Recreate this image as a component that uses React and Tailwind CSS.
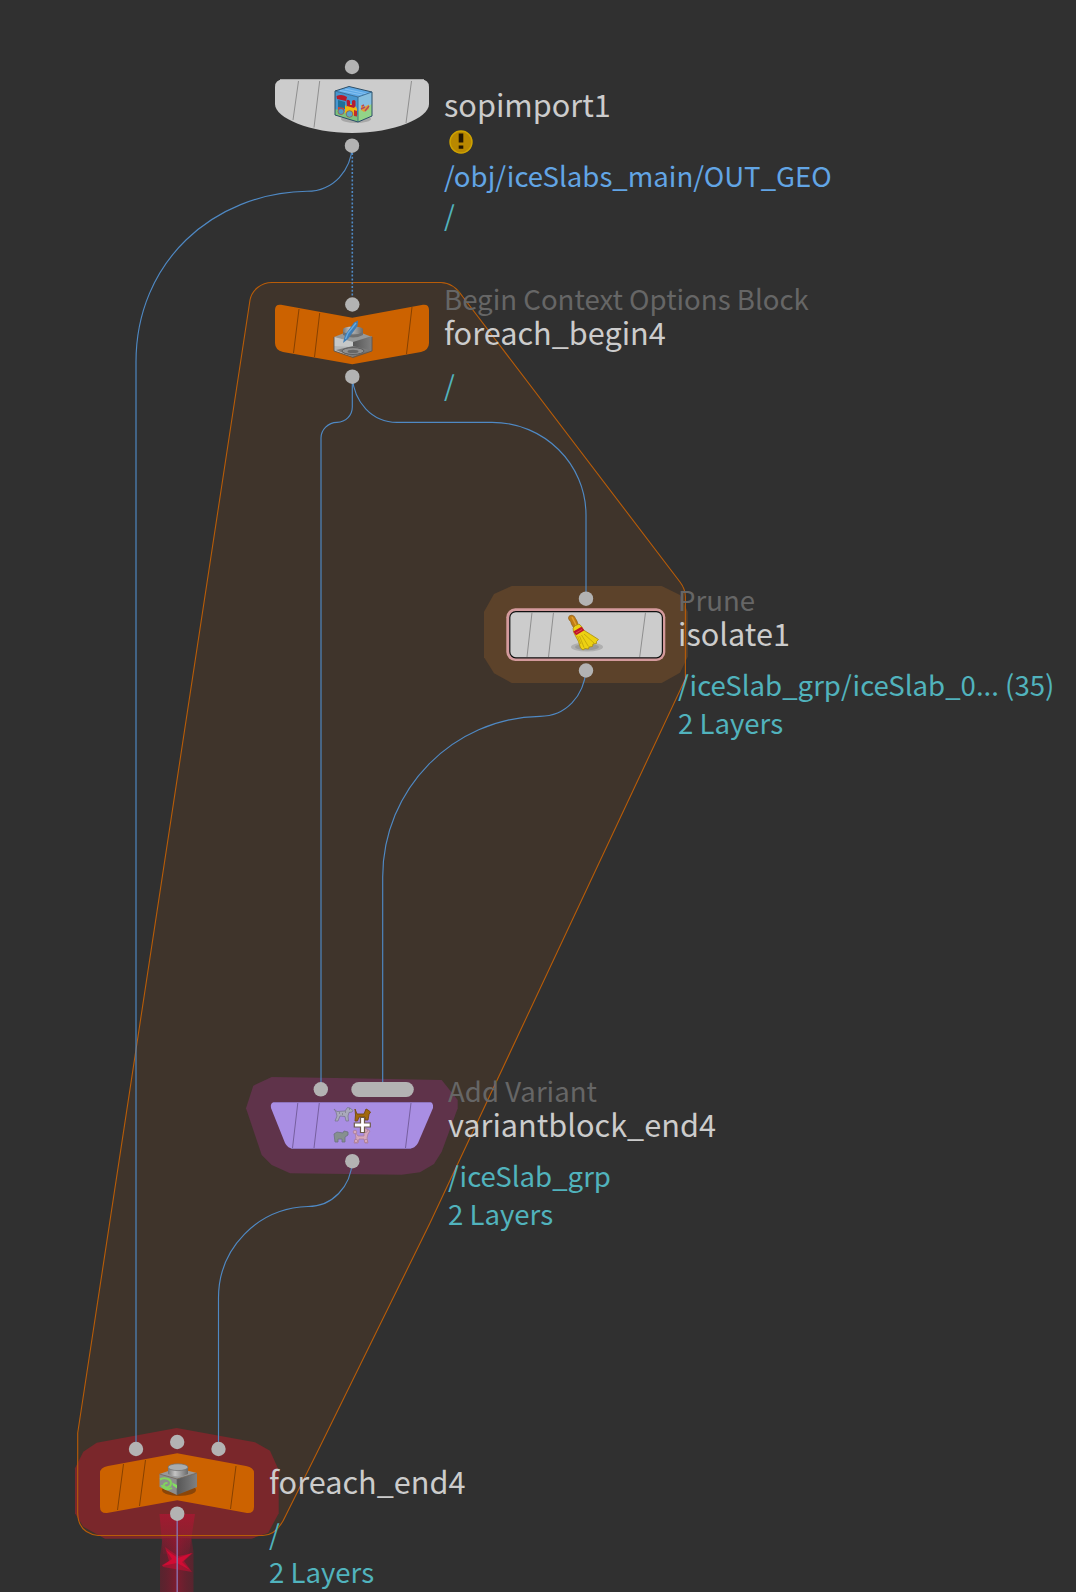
const REGION =
  "M250 300C252 290 261 282.5 272 282.5H441C450 282.5 457 288 463 297L680 582Q685.4 589 685.4 597V679L430 1223L318.3 1450L286 1515Q277 1535.5 263 1535.5H98Q78 1533 77.7 1513V1433Z";

const WIRES = [
  "M352.3 146C351 170 334 191 307 191.3C213 193 136 262 136 362V1449",
  "M352.3 377V407C352.3 415 346 422.3 337 422.3C328 422.3 321 430 321 438V1089",
  "M352.3 377C354 402 372 422.3 397 422.3H492C544 422.3 586 464 586 515V598",
  "M586 670C584 696 566 716.3 540 716.3C453 718 382.7 789 382.7 877V1089",
  "M352.3 1161C351 1187 332 1206.5 308 1206.5C258 1208 218.5 1248 218.5 1298V1449",
];

const DOTS = [
  [352, 67], [352, 145.7],
  [352.3, 304.5], [352.3, 376.7],
  [586, 598.7], [586, 670.5],
  [320.8, 1089.3], [352.3, 1161.2],
  [136, 1449], [177.2, 1442], [218.5, 1449], [177.2, 1513.7],
];

function Ticks({ d, stroke }) {
  return <path d={d} stroke={stroke} strokeWidth="1" fill="none" />;
}

function ToyBox() {
  return (
    <g transform="translate(334 86)">
      <ellipse cx="22" cy="33" rx="15" ry="4" fill="#8d8d8d" opacity=".6" />
      <path d="M1 5L24 11V36L1 29Z" fill="#4796cf" />
      <path d="M1 23L24 29V36L1 29Z" fill="#7cc27c" />
      <path d="M24 11L38 6V30L24 36Z" fill="#86bfe0" />
      <path d="M24 25L38 18V30L24 36Z" fill="#93d488" />
      <path d="M1 5L15 0.5L38 6L24 11Z" fill="#5ea9e6" />
      <path d="M6 4.5L28 9M11 3L33 8" stroke="#86c1f0" strokeWidth="1.1" />
      <path d="M2.5 10Q8 7.5 13 11L12 15L3 13Z" fill="#b81a2a" />
      <path d="M4 14L11 16V23L4 22Z" fill="#1f6f98" />
      <path d="M11 19L13 21V18L15 17L22 21L23 23V30L11 27Z" fill="#efb810" />
      <path d="M12.5 14.5Q14 13 16 15V19L18 19V15Q20 13 21.5 15V20L20 22L13 20Z" fill="#b51c30" />
      <path d="M4 21L10 22V25L4 24Z" fill="#d6452a" />
      <circle cx="7" cy="25.5" r="3" fill="#4d9cc9" stroke="#a94a3c" strokeWidth=".7" />
      <circle cx="15.5" cy="28" r="3.3" fill="#5ba5c8" stroke="#8f5a4a" strokeWidth=".8" />
      <path d="M20 24L23 25V30.5L20 30Z" fill="#bf2c2c" />
      <path d="M27 19L30 21L35 18.5V23L30 26L27 24Z" fill="#dfa13a" />
      <path d="M27 23L31 21M31 25L35 20M28 20L30 19" stroke="#b3485e" strokeWidth="1.5" />
      <path d="M1 5L15 0.5L38 6V30L24 36L1 29Z" fill="none" stroke="#2d4e66" strokeWidth="1" />
      <path d="M1 5L24 11L38 6M24 11V36" fill="none" stroke="#2d5f86" strokeWidth=".8" />
    </g>
  );
}

function Brick() {
  return (
    <g transform="translate(159 1463)">
      <ellipse cx="20" cy="27" rx="17" ry="6" fill="#3c2412" opacity=".45" />
      <path d="M0.5 11L18 16V32L0.5 24Z" fill="#8d8d8d" />
      <path d="M18 16L38 10V24L18 32Z" fill="url(#side)" />
      <path d="M0.5 11L18 5L38 10L18 16Z" fill="#999" />
      <path d="M9 4V11Q19 16 29 11V4Z" fill="url(#stud)" />
      <ellipse cx="19" cy="4.2" rx="10" ry="3.4" fill="#a9adaf" stroke="#6f6f6f" strokeWidth=".7" />
      <path d="M0.5 11L18 16V32M18 16L38 10" fill="none" stroke="#666" strokeWidth=".7" />
      <path
        d="M1 16.5C6 14 12 16 12 20C12 25 6 25.5 5 22.5C4.6 20.5 7 19.5 8.5 20.5M2.5 22C4 26 9 27.5 13 25"
        fill="none" stroke="#82d45c" strokeWidth="2" />
      <path d="M13 19.5L18 22V25.5L14 22.5Z" fill="#82e060" />
    </g>
  );
}

function BeginIcon() {
  return (
    <g transform="translate(334 320)">
      <path d="M9 9Q10 6.5 19 6.5Q28 6.5 29 9V18H9Z" fill="url(#stud)" />
      <path d="M0 17L9 13.5L29 13.5L38 17L19 23Z" fill="#969898" />
      <path d="M9 12Q19 17 29 12V15Q19 20 9 15Z" fill="#6f6f6f" />
      <path d="M0 17L19 22V37L0 31Z" fill="#b4b6b6" />
      <path d="M0 17L19 22V27L0 26Z" fill="#c6c8c8" />
      <path d="M19 22L38 16V31L19 37Z" fill="url(#side)" />
      <path d="M2 30L19 26L36 30L19 37Z" fill="#7b7b7b" />
      <ellipse cx="19" cy="31" rx="11" ry="3.4" fill="#919191" stroke="#5b5b5b" />
      <ellipse cx="19" cy="31.4" rx="5.5" ry="1.6" fill="#666" />
      <path d="M0 31L19 37.5L38 31V17M0 17V31" fill="none" stroke="#5c5650" strokeWidth=".9" />
      <path d="M9 23L11 15L20 2.5L24 0.5L23.5 6L14 19Z" fill="#3f7db5" />
      <path d="M11.5 19L14 13L22 3" fill="none" stroke="#69aade" strokeWidth="1.4" />
    </g>
  );
}

function Broom() {
  return (
    <g transform="translate(566 614)">
      <ellipse cx="21" cy="33" rx="16" ry="4.5" fill="#777" opacity=".35" />
      <ellipse cx="21" cy="33" rx="12" ry="3.2" fill="#777" opacity=".4" />
      <path d="M2.5 4Q2.5 1 6 1.2Q8.5 1.5 9.5 4.5Q11.5 7 12 11L7.5 13.5Q5 10 4.7 7.5Q2.5 6 2.5 4Z" fill="#c07d14" stroke="#8d5c12" strokeWidth=".7" />
      <path d="M6 3L10 11" stroke="#dfa032" strokeWidth="1.5" />
      <path d="M7 14Q9 11 13 10Q16 12 17.5 16Q24 20 32.5 25.5L30.5 27.5L30.5 29.5L27 30L26.5 32.5L23 33L22.5 35L19 34.5L17 36L14.5 34Q13 27 9 21Q7 18 7 14Z" fill="#ecd112" stroke="#a78a0d" strokeWidth=".8" />
      <path d="M13.5 22L18 33.5M15.5 21L22.5 32.5M18 20L28 29M11.5 22L15 30" stroke="#c5a70b" strokeWidth=".9" />
      <path d="M7.3 17.5L15.5 12.8L18.3 16.3L10 21.3Z" fill="#c0122a" />
      <path d="M10 19L16 15.5" stroke="#e2574f" strokeWidth=".8" />
    </g>
  );
}

function VariantIcon() {
  return (
    <g>
      <g transform="translate(333 1107)" fill="#a9a9bb" stroke="#74728a" strokeWidth=".7">
        <path d="M1 2L4 4.5L12 4L14.5 0.5L17 1L20 3.5L19 5L16 5.5L15 9L15.5 14H13L12 9.5L7 9L5 14H2L4 9L3 5Z" />
        <path d="M6 6H7M9 7H10M12 5H13M16 2H17" stroke="#4f4d5d" />
      </g>
      <path d="M355 1109L357 1114H364L366 1109L368 1110L370.5 1112L369 1114.5L368 1120H365V1117H359L357.5 1121H355L355.5 1115Z" fill="#a1690c" stroke="#75490b" strokeWidth=".9" />
      <path d="M334 1134L337 1132L343 1133L344 1131L348 1132L348 1135L345 1137V1142H342V1139H338V1142H335Z" fill="#86908f" stroke="#6c7280" strokeWidth=".8" />
      <g transform="translate(353 1128)" fill="#d6a8bd" stroke="#a67b93" strokeWidth=".7">
        <path d="M2 4L5 8L11 8L11 2L14 1L17 3L15 6L14 10L15 15H12L11 11L6 11L5 15H1L3 10Z" />
        <circle cx="2" cy="4" r="1.8" />
        <circle cx="12.5" cy="2.5" r="2" />
        <circle cx="3" cy="13" r="1.7" />
        <circle cx="13" cy="13" r="1.7" />
      </g>
      <path d="M360.5 1117.5H364.5V1123H370.3V1127H364.5V1132.5H360.5V1127H354.3V1123H360.5Z" fill="#fff" stroke="#6d5a4a" strokeWidth="1.2" />
    </g>
  );
}

function Network() {
  return (
    <svg className="absolute inset-0" width="1076" height="1592" viewBox="0 0 1076 1592" fill="none">
      <defs>
        <linearGradient id="stud">
          <stop offset="0" stopColor="#777" />
          <stop offset=".35" stopColor="#c4c4c4" />
          <stop offset="1" stopColor="#6b6b6b" />
        </linearGradient>
        <linearGradient id="side">
          <stop offset="0" stopColor="#565656" />
          <stop offset="1" stopColor="#808080" />
        </linearGradient>
        <linearGradient id="trail">
          <stop offset="0" stopColor="#6b1f2e" stopOpacity=".65" />
          <stop offset=".2" stopColor="#6b1f2e" stopOpacity=".85" />
          <stop offset=".5" stopColor="#7d1c2f" />
          <stop offset=".8" stopColor="#6b1f2e" stopOpacity=".85" />
          <stop offset="1" stopColor="#6b1f2e" stopOpacity=".65" />
        </linearGradient>
        <linearGradient id="flare" x1="0" y1="0" x2="0" y2="1">
          <stop offset="0" stopColor="#b01533" stopOpacity=".7" />
          <stop offset="1" stopColor="#b01533" stopOpacity=".1" />
        </linearGradient>
      </defs>

      <path d={REGION} fill="#3f342b" />

      {/* halos */}
      <path d="M511.7 586H661.7L680 595L687.7 611.7V656.7L680 672.7L661.7 683H511.7L494 673.3L484 657.3V611.7L494 594Z" fill="#5c422a" />
      <path d="M271.7 1077L352 1078.3L441.7 1080L457.7 1100V1108.3L441.7 1151.7L434 1164L420 1172.3L401.7 1174.7L290 1173.3L271.7 1165L261.7 1155L246 1108.3L253.3 1085.7Z" fill="#5f334a" />
      <path d="M176.7 1428L255 1442.3L270 1450.7L278.7 1470V1513.3L268.3 1532.7L251.7 1538.7H105L83.3 1526.7L75 1513.3V1468.3L83.3 1451.7L96.7 1442.7Z" fill="#7a272b" />

      <path d="M162.5 1538H191.5L193.5 1552V1592H160V1556Z" fill="url(#trail)" />
      <path d="M159.5 1514H195L189 1554H163Z" fill="url(#flare)" />
      <path d="M165 1547L178 1556L193 1553L184 1561L192 1572L163 1567L162 1565L169 1561Z" fill="#d50934" opacity=".5" />
      <path d="M162 1566L172 1559L166 1550L178 1558L192 1553L182 1562L190 1570L177 1563Z" fill="#e00936" opacity=".75" />

      <path d={REGION} stroke="#b85c08" strokeWidth="1.1" />

      {WIRES.map((d) => <path key={d} d={d} stroke="#4f89c4" strokeWidth="1.15" />)}
      <path d="M352.3 153V297" stroke="#4f89c4" strokeWidth="1.6" strokeDasharray="2 1.8" />
      <path d="M177.2 1514V1592" stroke="#8b6ca6" strokeWidth="1.5" />

      {/* sopimport1 */}
      <path d="M275 87Q275 79.5 283 79.5H421Q429 79.5 429 87V104C429 118 394 133 352 133C310 133 275 118 275 104Z" fill="#ccc" />
      <path d="M280 79.5H424" stroke="#aaa" />
      <Ticks d="M298.5 81L293 120M319.7 81L314 127.5M411.5 81L406 123" stroke="#8f8f8f" />
      <ToyBox />

      {/* foreach_begin4 */}
      <path d="M275 310Q275 304 281 304.7L352.3 317.7L423 304.7Q429 304 429 310V343Q429 350 421 352L352.3 364.3L283 352Q275 350 275 343Z" fill="#cc6200" />
      <Ticks d="M299 309L293.5 353M319.7 313L314.5 357M412 307L406.5 354" stroke="#874100" />
      <BeginIcon />

      {/* isolate1 */}
      <rect x="506.3" y="608.3" width="159" height="52.7" rx="9" fill="#d49a9c" />
      <rect x="509.8" y="611.6" width="152.6" height="46.2" rx="6" fill="#ccc" stroke="#111" strokeWidth="1.2" />
      <Ticks d="M532 612.5L527 657M553.5 612.5L548.5 657M645.5 612.5L639.7 657" stroke="#8f8f8f" />
      <Broom />

      {/* variantblock_end4 */}
      <path d="M274 1102.3H430Q433.5 1102.3 433 1108L418 1143Q415 1148.7 409 1148.7H293Q288 1148.7 285 1143L271 1108Q270 1103 274 1102.3Z" fill="#a98ee3" />
      <path d="M273 1102.5H431M291 1148.5H411" stroke="#8b73bd" strokeWidth=".8" />
      <Ticks d="M297.8 1103L292.5 1148M319.3 1103L314 1148M411 1103L405.5 1148" stroke="#765f9f" />
      <VariantIcon />
      <rect x="351.3" y="1082" width="62.5" height="15" rx="7.5" fill="#b3b3b3" />

      {/* foreach_end4 */}
      <path d="M100 1473Q100 1467.5 108 1466L177.2 1453.3L246 1466Q254 1467.5 254 1473V1507Q254 1513.5 247 1513L177.2 1500.3L107 1513Q100 1513.5 100 1507Z" fill="#cc6200" />
      <Ticks d="M123.5 1464L117.5 1510M145.5 1460L139.5 1506M236 1466L230.5 1509" stroke="#874100" />
      <Brick />

      {DOTS.map(([x, y]) => <circle key={`${x}-${y}`} cx={x} cy={y} r="7.2" fill="#b3b3b3" />)}
    </svg>
  );
}

const Type = ({ children }) => <div className="text-[27.6px] leading-[34px] text-[#666]">{children}</div>;
const Name = ({ children }) => <div className="text-[30.65px] leading-[34px] text-[#ccc]">{children}</div>;
const Info = ({ children }) => <div className="text-[27.6px] leading-[38px] text-[#51b3bd]">{children}</div>;

export default function App() {
  return (
    <main className="relative w-[1076px] h-[1592px] overflow-hidden bg-[#303030] whitespace-nowrap font-['Noto_Sans_CJK_SC',sans-serif]">
      <Network />

      <div className="absolute left-[444px] top-[87px]">
        <Name>sopimport1</Name>
        <div className="h-[35px] pl-[4.5px] pt-[8.5px]">
          <svg width="24" height="24" viewBox="0 0 24 24">
            <circle cx="12" cy="12" r="11" fill="#b98800" stroke="#cfa300" strokeWidth="1.4" />
            <path d="M9.7 3.5H14.3V12.5H9.7ZM9.7 15.5H14.3V18.7H9.7Z" fill="#241700" />
          </svg>
        </div>
        <div className="text-[27.6px] leading-[39px] text-[#62a5e5]">/obj/iceSlabs_main/OUT_GEO</div>
        <Info>/</Info>
      </div>

      <div className="absolute left-[444px] top-[281px]">
        <Type>Begin Context Options Block</Type>
        <Name>foreach_begin4</Name>
        <div className="mt-4"><Info>/</Info></div>
      </div>

      <div className="absolute left-[678px] top-[582px]">
        <Type>Prune</Type>
        <Name>isolate1</Name>
        <div className="mt-[15px]">
          <Info>/iceSlab_grp/iceSlab_0... (35)</Info>
          <Info>2 Layers</Info>
        </div>
      </div>

      <div className="absolute left-[448px] top-[1073px]">
        <Type>Add Variant</Type>
        <Name>variantblock_end4</Name>
        <div className="mt-[15px]">
          <Info>/iceSlab_grp</Info>
          <Info>2 Layers</Info>
        </div>
      </div>

      <div className="absolute left-[269px] top-[1464px]">
        <Name>foreach_end4</Name>
        <div className="mt-4">
          <Info>/</Info>
          <Info>2 Layers</Info>
        </div>
      </div>
    </main>
  );
}
